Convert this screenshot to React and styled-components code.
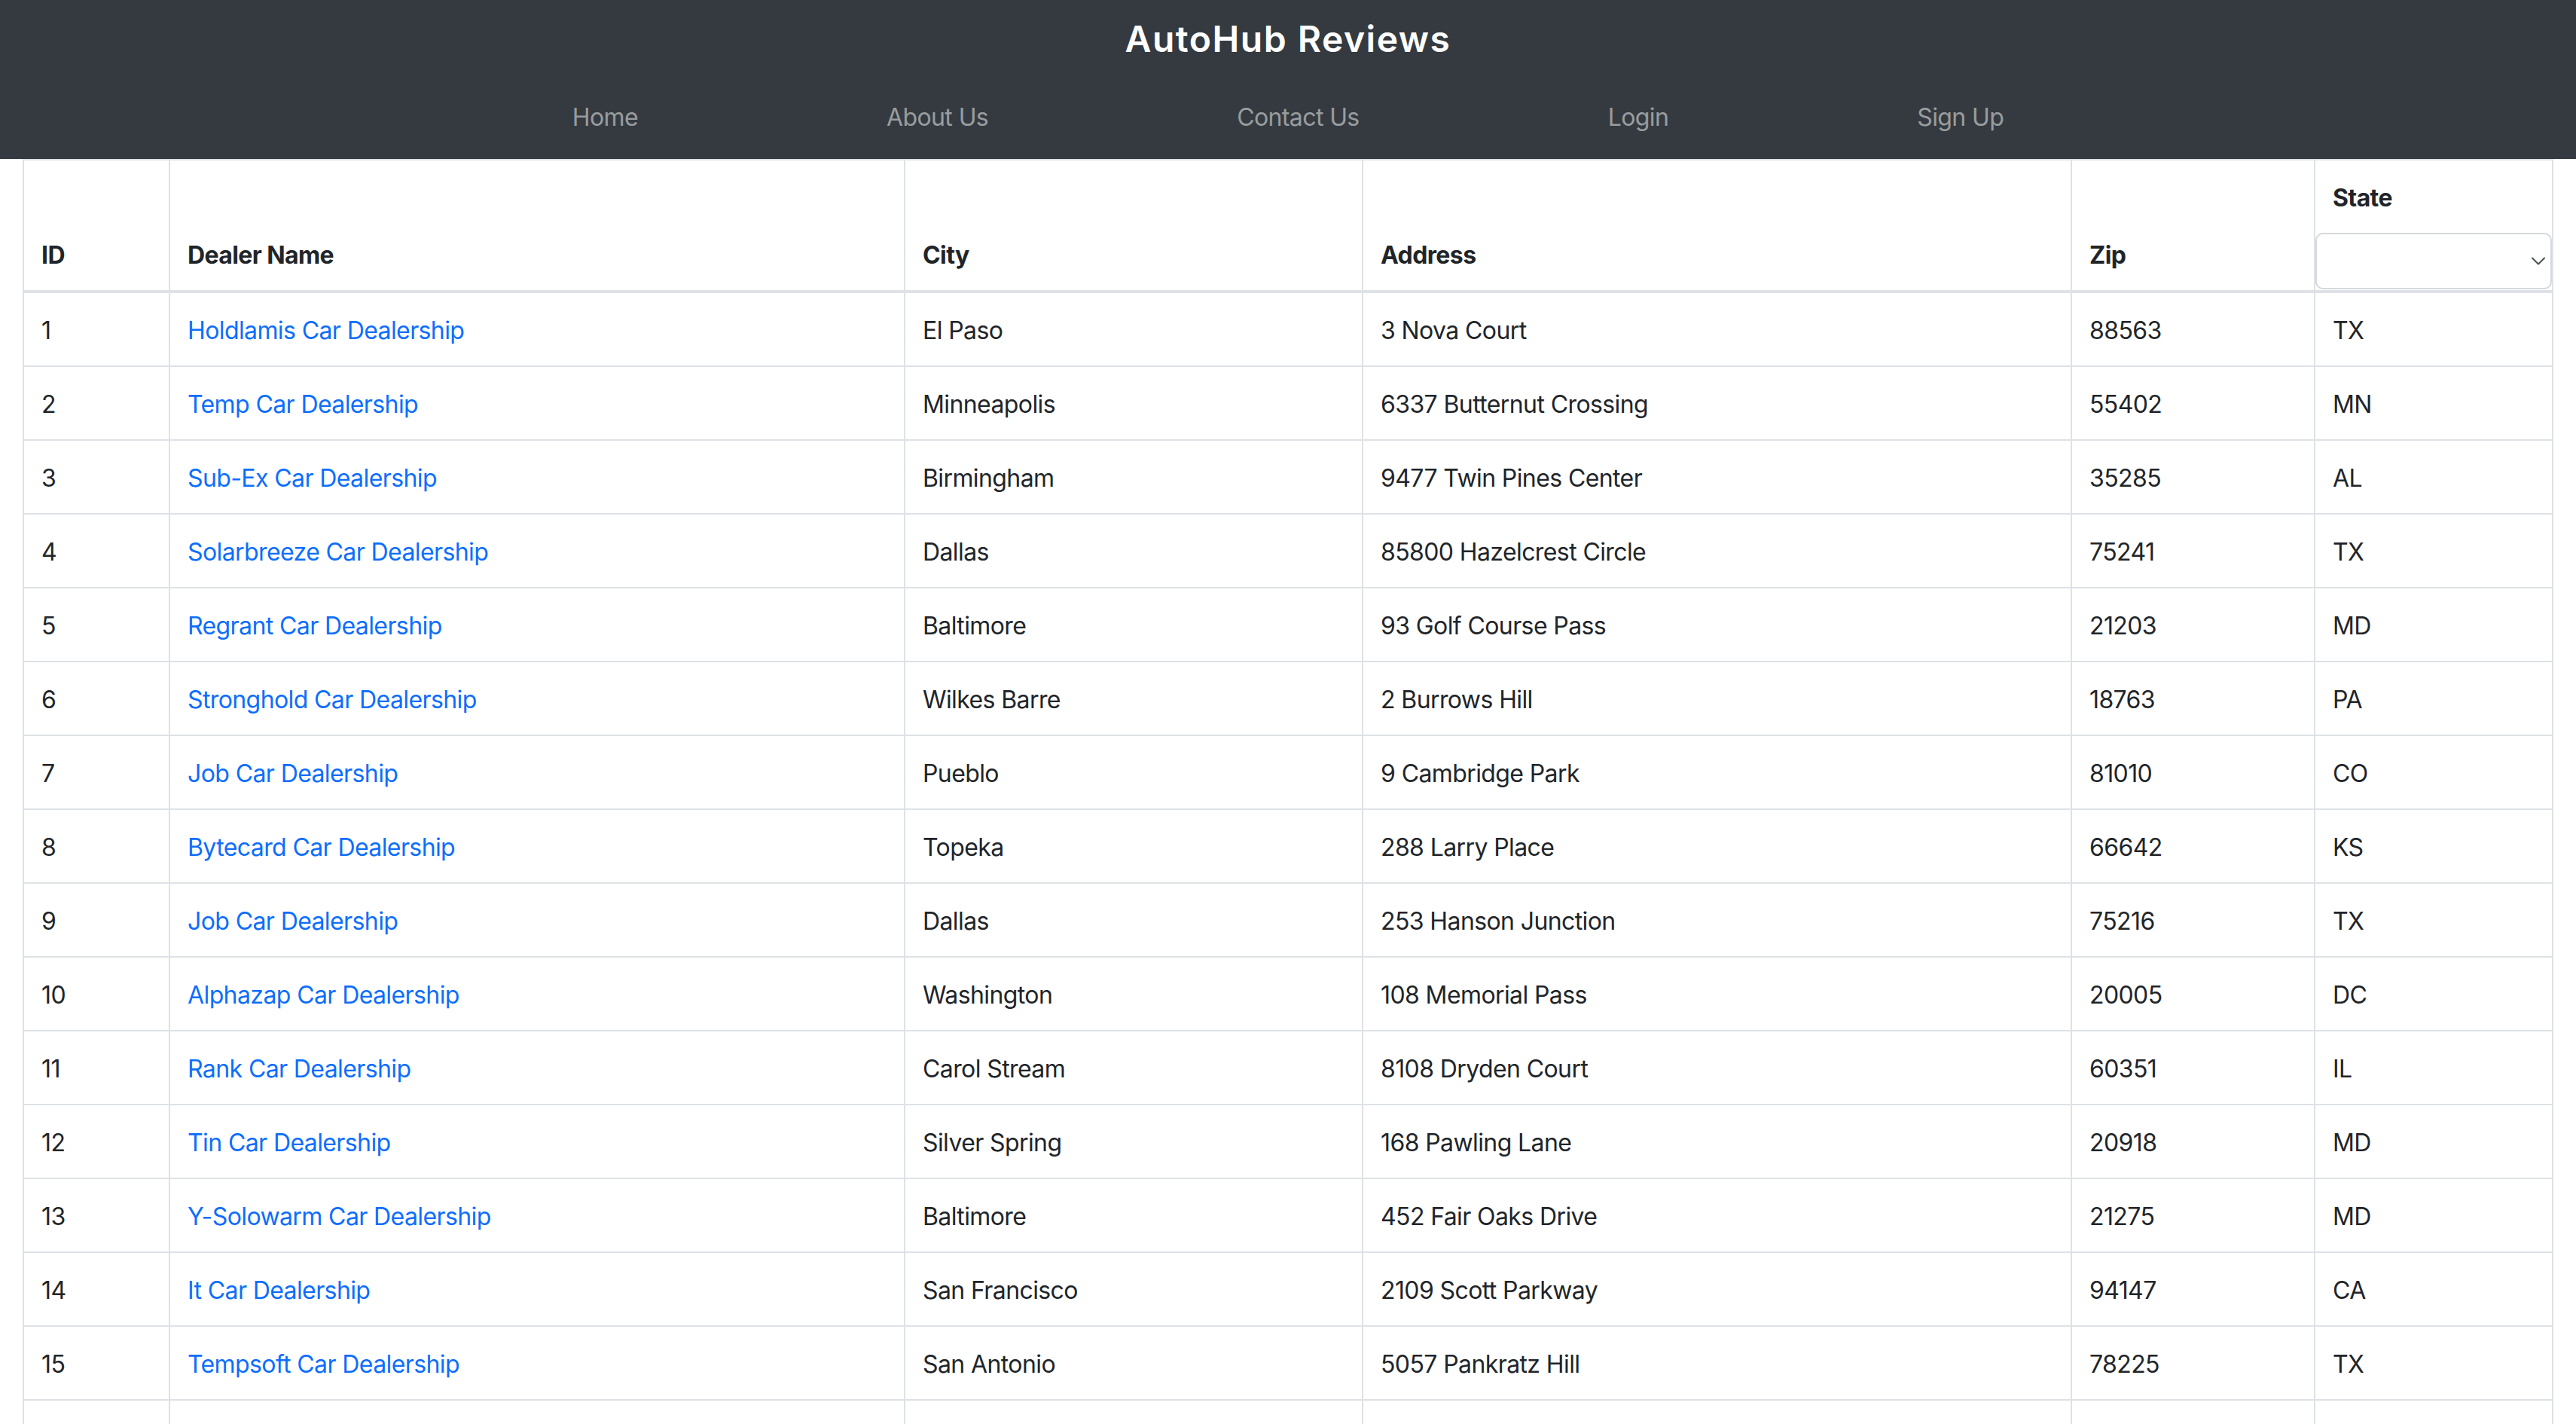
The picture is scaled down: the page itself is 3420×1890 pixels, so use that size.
import React from "react";
import styled, { createGlobalStyle } from "styled-components";

const GlobalStyle = createGlobalStyle`
  html, body {
    margin: 0;
    padding: 0;
    background: #ffffff;
    font-family: Inter, "Noto Sans", "Liberation Sans", sans-serif;
    color: #212529;
  }
  * { box-sizing: border-box; }
`;

const Header = styled.header`
  background: #343a40;
  height: 211px;
  padding-top: 23px;
  display: flex;
  flex-direction: column;
  align-items: center;
`;

const Title = styled.h1`
  margin: 0;
  font-size: 48px;
  line-height: 58px;
  font-weight: 600;
  color: #ffffff;
  letter-spacing: 1.5px;
`;

const Nav = styled.nav`
  margin-top: 51px;
  display: flex;
  justify-content: center;
  gap: 330px;
`;

const NavLink = styled.a`
  font-size: 32px;
  line-height: 48px;
  letter-spacing: -0.6px;
  color: rgba(255, 255, 255, 0.5);
  text-decoration: none;
  cursor: pointer;
`;

const Main = styled.main`
  padding: 0 30px;
`;

const Table = styled.table`
  width: 3360px;
  table-layout: fixed;
  border-collapse: separate;
  border-spacing: 0;
  border-top: 2px solid #dee2e6;
  border-left: 2px solid #dee2e6;
  font-size: 32px;
  line-height: 48px;
  letter-spacing: -0.6px;
`;

const Th = styled.th`
  width: ${(p) => p.$w}px;
  text-align: left;
  vertical-align: bottom;
  font-weight: 700;
  padding: 26px 24px ${(p) => (p.$filter ? "1px" : "22px")} 23px;
  border-right: 2px solid #dee2e6;
  border-bottom: 4px solid #dee2e6;
  color: #212529;
`;

const Td = styled.td`
  vertical-align: top;
  padding: 26px 24px 22px 23px;
  border-right: 2px solid #dee2e6;
  border-bottom: 2px solid #dee2e6;
  color: #212529;
  white-space: nowrap;
`;

const DealerLink = styled.a`
  color: #0d6efd;
  text-decoration: none;
  cursor: pointer;
`;

const SelectWrap = styled.div`
  position: relative;
  margin: 22px -24px 0 -23px;
  height: 75px;
`;

const Select = styled.select`
  appearance: none;
  -webkit-appearance: none;
  display: block;
  width: 100%;
  height: 75px;
  background: #ffffff;
  border: 2px solid #d4d8dc;
  border-radius: 10px;
  font-family: inherit;
  font-size: 32px;
  padding: 0 24px;
  color: #212529;
  outline: none;
`;

const Chevron = styled.svg`
  position: absolute;
  right: 9px;
  top: 32px;
  width: 18px;
  height: 11px;
  pointer-events: none;
`;

const dealers = [
  [1, "Holdlamis Car Dealership", "El Paso", "3 Nova Court", "88563", "TX"],
  [2, "Temp Car Dealership", "Minneapolis", "6337 Butternut Crossing", "55402", "MN"],
  [3, "Sub-Ex Car Dealership", "Birmingham", "9477 Twin Pines Center", "35285", "AL"],
  [4, "Solarbreeze Car Dealership", "Dallas", "85800 Hazelcrest Circle", "75241", "TX"],
  [5, "Regrant Car Dealership", "Baltimore", "93 Golf Course Pass", "21203", "MD"],
  [6, "Stronghold Car Dealership", "Wilkes Barre", "2 Burrows Hill", "18763", "PA"],
  [7, "Job Car Dealership", "Pueblo", "9 Cambridge Park", "81010", "CO"],
  [8, "Bytecard Car Dealership", "Topeka", "288 Larry Place", "66642", "KS"],
  [9, "Job Car Dealership", "Dallas", "253 Hanson Junction", "75216", "TX"],
  [10, "Alphazap Car Dealership", "Washington", "108 Memorial Pass", "20005", "DC"],
  [11, "Rank Car Dealership", "Carol Stream", "8108 Dryden Court", "60351", "IL"],
  [12, "Tin Car Dealership", "Silver Spring", "168 Pawling Lane", "20918", "MD"],
  [13, "Y-Solowarm Car Dealership", "Baltimore", "452 Fair Oaks Drive", "21275", "MD"],
  [14, "It Car Dealership", "San Francisco", "2109 Scott Parkway", "94147", "CA"],
  [15, "Tempsoft Car Dealership", "San Antonio", "5057 Pankratz Hill", "78225", "TX"],
  [16, "Zoolab Car Dealership", "Denver", "4 Kensington Way", "80243", "CO"],
  [17, "Fixflex Car Dealership", "Houston", "77 Summit Street", "77281", "TX"],
];

const navItems = ["Home", "About Us", "Contact Us", "Login", "Sign Up"];

export default function App() {
  return (
    <>
      <GlobalStyle />
      <Header>
        <Title>AutoHub Reviews</Title>
        <Nav>
          {navItems.map((n) => (
            <NavLink key={n}>{n}</NavLink>
          ))}
        </Nav>
      </Header>
      <Main>
        <Table>
          <thead>
            <tr>
              <Th $w={194}>ID</Th>
              <Th $w={976}>Dealer Name</Th>
              <Th $w={608}>City</Th>
              <Th $w={941}>Address</Th>
              <Th $w={323}>Zip</Th>
              <Th $w={316} $filter>
                State
                <SelectWrap>
                  <Select defaultValue="">
                    <option value=""></option>
                    <option value="TX">TX</option>
                    <option value="MN">MN</option>
                    <option value="AL">AL</option>
                  </Select>
                  <Chevron viewBox="0 0 18 11" fill="none">
                    <path d="M1 1.5 L9 9.5 L17 1.5" stroke="#4a4f55" strokeWidth="2" strokeLinecap="round" strokeLinejoin="round" />
                  </Chevron>
                </SelectWrap>
              </Th>
            </tr>
          </thead>
          <tbody>
            {dealers.map(([id, name, city, addr, zip, st]) => (
              <tr key={id}>
                <Td>{id}</Td>
                <Td>
                  <DealerLink>{name}</DealerLink>
                </Td>
                <Td>{city}</Td>
                <Td>{addr}</Td>
                <Td>{zip}</Td>
                <Td>{st}</Td>
              </tr>
            ))}
          </tbody>
        </Table>
      </Main>
    </>
  );
}
